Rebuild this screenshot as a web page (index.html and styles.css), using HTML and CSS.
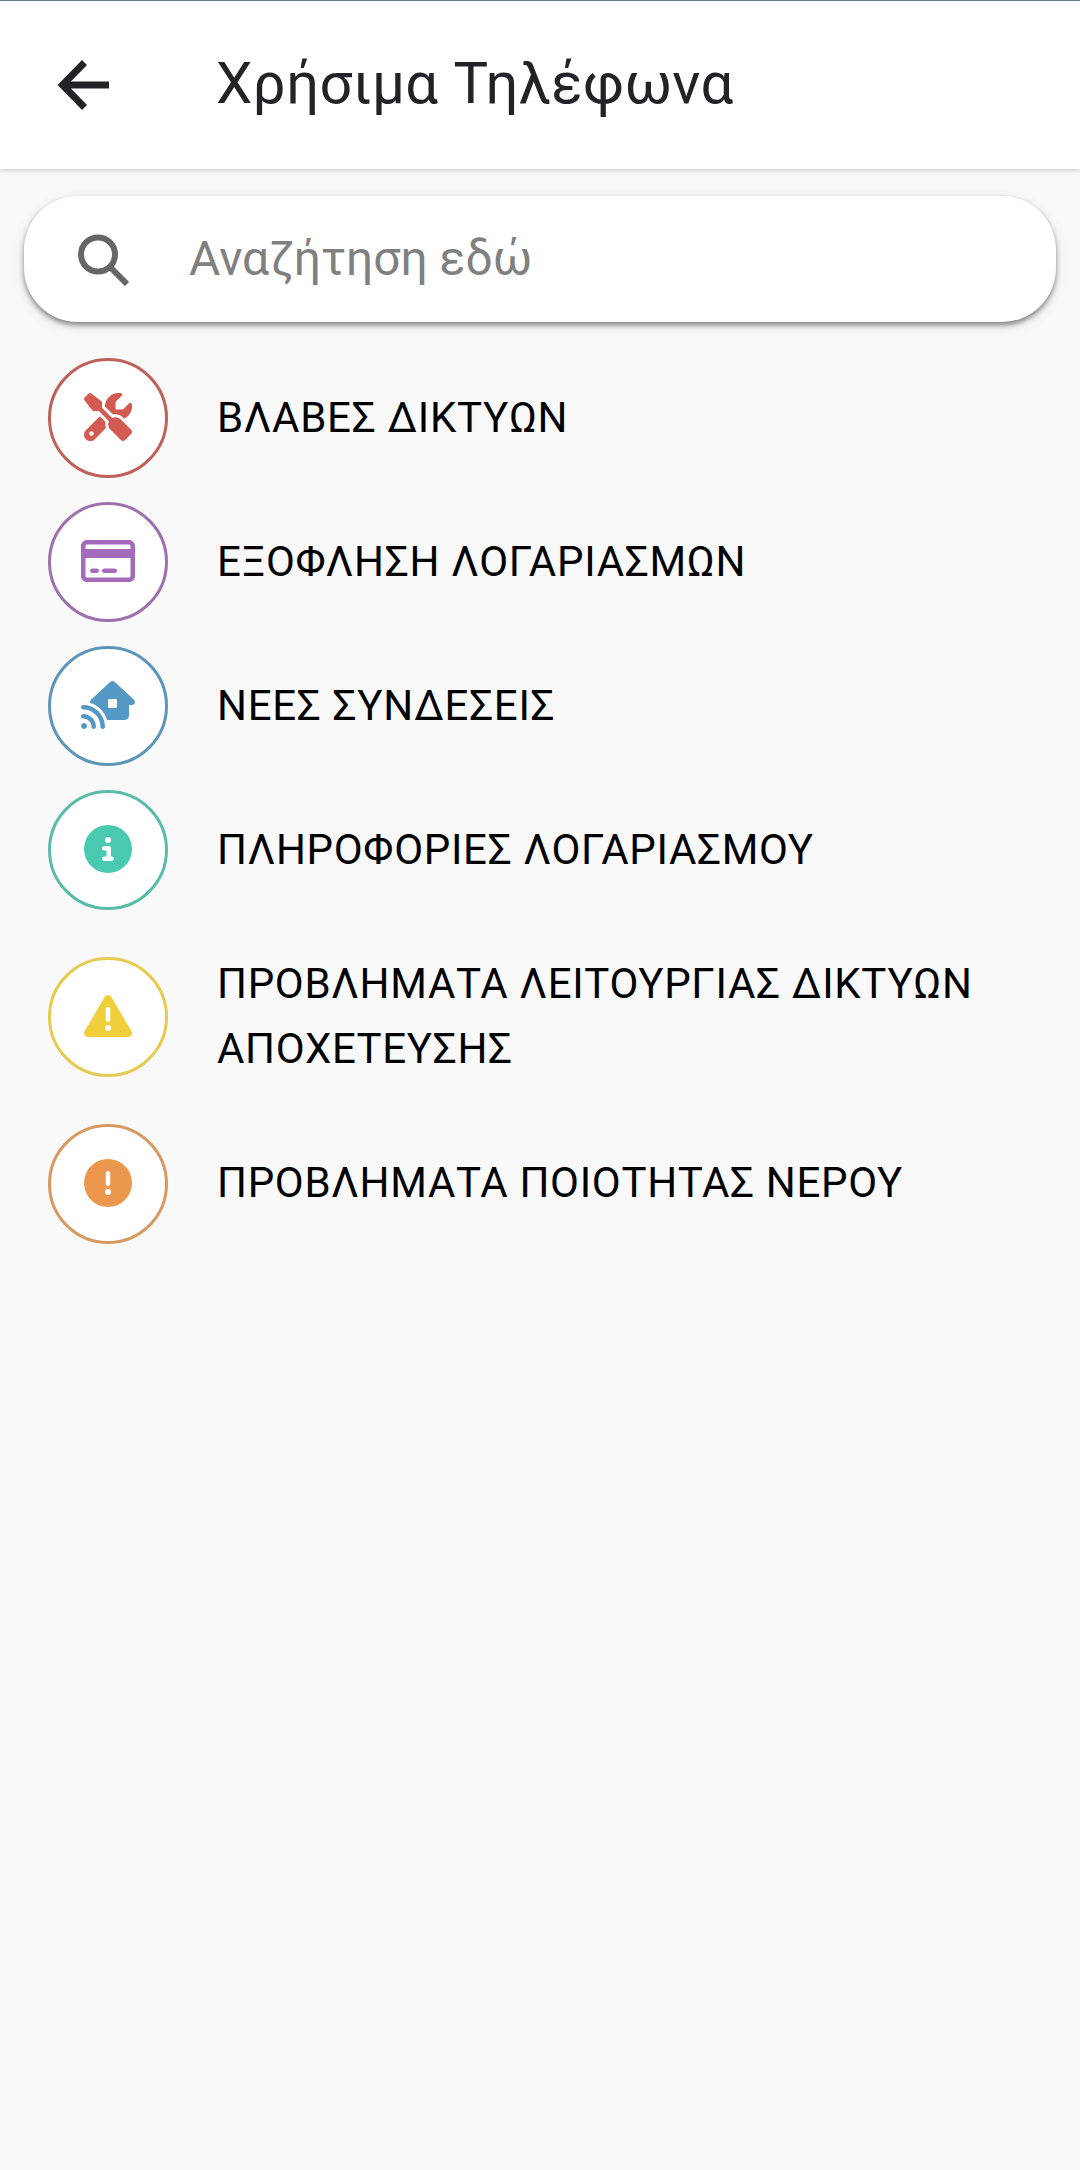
FILE: index.html
```
<!DOCTYPE html>
<html lang="el">
<head>
    <meta charset="UTF-8">
    <title>Χρήσιμα Τηλέφωνα</title>
    <link rel="stylesheet" href="styles.css">
</head>
<body>
    <header class="app-bar">
        <svg class="back" viewBox="0 0 56 56">
            <path d="M53 28H7M28.5 5.500L6.500 28l22 22.500"/>
        </svg>
        <h1>Χρήσιμα Τηλέφωνα</h1>
    </header>

    <div class="search">
        <svg class="search-icon" viewBox="0 0 54 54">
            <circle cx="21" cy="22.500" r="17"/>
            <path d="M32.500 34.500L50 52"/>
        </svg>
        <span class="placeholder">Αναζήτηση εδώ</span>
    </div>

    <ul class="list">
        <li class="item red">
            <span class="avatar">
                <svg viewBox="0 0 512 512"><path d="M78.6 5C69.1-2.4 55.6-1.5 47 7L7 47c-8.5 8.5-9.4 22-2.1 31.600l80 104c4.500 5.900 11.600 9.400 19 9.400h54.100l109 109c-14.700 29-10 65.400 14.300 89.600l112 112c12.500 12.500 32.800 12.500 45.300 0l64-64c12.500-12.500 12.500-32.800 0-45.300l-112-112c-24.200-24.200-60.600-29-89.600-14.300l-109-109V104c0-7.500-3.500-14.500-9.400-19L78.600 5zM19.900 396.100C7.200 408.800 0 426.100 0 444.100C0 481.600 30.400 512 67.900 512c18 0 35.300-7.200 48-19.900L233.700 374.300c-7.800-20.900-9-43.600-3.600-65.100l-61.700-61.700L19.900 396.100zM512 144c0-10.500-1.100-20.700-3.200-30.500c-2.400-11.200-16.100-14.100-24.200-6l-63.900 63.900c-3 3-7.100 4.700-11.300 4.700H352c-8.800 0-16-7.200-16-16V102.600c0-4.200 1.700-8.300 4.700-11.300l63.900-63.900c8.100-8.100 5.200-21.800-6-24.200C388.700 1.100 378.500 0 368 0C288.500 0 224 64.500 224 144l0 .8 85.300 85.300c36-9.100 75.800 .5 104 28.700L429 274.500c49-23 83-72.800 83-130.500zM56 432a24 24 0 1 1 48 0 24 24 0 1 1-48 0z"/></svg>
            </span>
            <span class="label">ΒΛΑΒΕΣ ΔΙΚΤΥΩΝ</span>
        </li>
        <li class="item purple">
            <span class="avatar">
                <svg class="wide" viewBox="0 0 576 512"><path d="M512 80c8.800 0 16 7.200 16 16v32H48V96c0-8.800 7.200-16 16-16H512zm16 144V416c0 8.800-7.200 16-16 16H64c-8.800 0-16-7.200-16-16V224H528zM64 32C28.700 32 0 60.700 0 96V416c0 35.300 28.700 64 64 64H512c35.300 0 64-28.700 64-64V96c0-35.300-28.700-64-64-64H64zm56 304c-13.300 0-24 10.700-24 24s10.700 24 24 24h48c13.300 0 24-10.700 24-24s-10.700-24-24-24H120zm128 0c-13.300 0-24 10.700-24 24s10.700 24 24 24H360c13.300 0 24-10.700 24-24s-10.700-24-24-24H248z"/></svg>
            </span>
            <span class="label">ΕΞΟΦΛΗΣΗ ΛΟΓΑΡΙΑΣΜΩΝ</span>
        </li>
        <li class="item blue">
            <span class="avatar">
                <svg class="wide" viewBox="0 0 576 512"><path d="M357.700 8.500c-12.300-11.300-31.200-11.300-43.400 0l-208 192c-9.400 8.600-12.700 22-8.500 34c87.100 25.300 155.600 94.200 180.300 181.500H464c26.500 0 48-21.500 48-48V256h32c13.200 0 25-8.100 29.800-20.300s1.600-26.200-8.100-35.200l-208-192zM288 208c0-8.800 7.200-16 16-16h64c8.800 0 16 7.200 16 16v64c0 8.800-7.200 16-16 16H304c-8.800 0-16-7.200-16-16V208zM24 256c-13.300 0-24 10.700-24 24s10.700 24 24 24c101.600 0 184 82.400 184 184c0 13.300 10.700 24 24 24s24-10.700 24-24c0-128.100-103.900-232-232-232zm8 256c17.700 0 32-14.300 32-32s-14.300-32-32-32s-32 14.300-32 32s14.300 32 32 32zM0 376c0 13.300 10.700 24 24 24c48.600 0 88 39.400 88 88c0 13.300 10.700 24 24 24s24-10.700 24-24c0-75.100-60.900-136-136-136c-13.300 0-24 10.700-24 24z"/></svg>
            </span>
            <span class="label">ΝΕΕΣ ΣΥΝΔΕΣΕΙΣ</span>
        </li>
        <li class="item green">
            <span class="avatar">
                <svg viewBox="0 0 512 512"><path d="M256 512A256 256 0 1 0 256 0a256 256 0 1 0 0 512zM216 336h24V272H216c-13.300 0-24-10.700-24-24s10.700-24 24-24h48c13.300 0 24 10.700 24 24v88h8c13.300 0 24 10.700 24 24s-10.700 24-24 24H216c-13.300 0-24-10.700-24-24s10.700-24 24-24zm40-208a32 32 0 1 1 0 64 32 32 0 1 1 0-64z"/></svg>
            </span>
            <span class="label">ΠΛΗΡΟΦΟΡΙΕΣ ΛΟΓΑΡΙΑΣΜΟΥ</span>
        </li>
        <li class="item yellow">
            <span class="avatar">
                <svg viewBox="0 0 512 512"><path d="M256 32c14.200 0 27.300 7.500 34.500 19.800l216 368c7.300 12.400 7.300 27.700 .2 40.100S486.300 480 472 480H40c-14.300 0-27.600-7.700-34.700-20.100s-7-27.800 .2-40.100l216-368C228.700 39.500 241.800 32 256 32zm0 128c-13.300 0-24 10.700-24 24V296c0 13.300 10.700 24 24 24s24-10.700 24-24V184c0-13.300-10.700-24-24-24zm32 224a32 32 0 1 0-64 0 32 32 0 1 0 64 0z"/></svg>
            </span>
            <span class="label">ΠΡΟΒΛΗΜΑΤΑ ΛΕΙΤΟΥΡΓΙΑΣ ΔΙΚΤΥΩΝ ΑΠΟΧΕΤΕΥΣΗΣ</span>
        </li>
        <li class="item orange">
            <span class="avatar">
                <svg viewBox="0 0 512 512"><path d="M256 512A256 256 0 1 0 256 0a256 256 0 1 0 0 512zm0-384c13.300 0 24 10.700 24 24V264c0 13.300-10.700 24-24 24s-24-10.700-24-24V152c0-13.300 10.700-24 24-24zM224 352a32 32 0 1 1 64 0 32 32 0 1 1-64 0z"/></svg>
            </span>
            <span class="label">ΠΡΟΒΛΗΜΑΤΑ ΠΟΙΟΤΗΤΑΣ ΝΕΡΟΥ</span>
        </li>
    </ul>
</body>
</html>
```

FILE: styles.css
```
* {
    box-sizing: border-box;
}
body {
    margin: 0;
    min-height: 100vh;
    background-color: #f9f9f9;
    font-family: Roboto, sans-serif;
    color: #000;
}
.app-bar {
    display: flex;
    align-items: center;
    height: 169px;
    padding-left: 56px;
    background-color: #fff;
    border-top: 1px solid #5f7f87;
    box-shadow: 0 1px 5px rgba(0, 0, 0, 0.2);
}
.back {
    width: 56px;
    height: 56px;
    fill: none;
    stroke: #212326;
    stroke-width: 7;
}
h1 {
    margin: 0 0 0 104px;
    padding-bottom: 4px;
    font-size: 58px;
    font-weight: 400;
    line-height: 68px;
    letter-spacing: 0.45px;
    color: #212326;
}
.search {
    display: flex;
    align-items: center;
    height: 126px;
    margin: 27px 24px 0;
    padding-left: 53px;
    background-color: #fff;
    border-radius: 54px;
    box-shadow: 0 3px 5px rgba(0, 0, 0, 0.42), 0 4px 14px rgba(0, 0, 0, 0.12);
}
.search-icon {
    width: 54px;
    height: 54px;
    fill: none;
    stroke: #666;
    stroke-width: 6;
}
.placeholder {
    margin-left: 58px;
    font-size: 48px;
    line-height: 56px;
    color: #808080;
}
.list {
    margin: 24px 0 0;
    padding: 0;
    list-style: none;
}
.item {
    display: flex;
    align-items: center;
    min-height: 144px;
    padding: 0 48px;
}
.avatar {
    display: flex;
    flex: none;
    align-items: center;
    justify-content: center;
    width: 120px;
    height: 120px;
    padding-bottom: 2px;
    border: 3px solid;
    border-radius: 50%;
    background-color: #fff;
}
.avatar svg {
    width: 48px;
    height: 48px;
    fill: var(--icon);
}
.avatar svg.wide {
    width: 54px;
}
.label {
    margin-left: 49px;
    padding: 29px 0 31px;
    font-size: 42px;
    line-height: 65px;
    letter-spacing: 0.7px;
}
.orange .label {
    padding-bottom: 33px;
}
.red { --icon: #d15b50; }
.purple { --icon: #a46abb; }
.blue { --icon: #5498c6; }
.green { --icon: #48c9b0; }
.yellow { --icon: #f0ce3c; }
.orange { --icon: #eb984e; }
.red .avatar { border-color: #bd6159; }
.purple .avatar { border-color: #9d70ae; }
.blue .avatar { border-color: #5d95b9; }
.green .avatar { border-color: #58bca9; }
.yellow .avatar { border-color: #e6cb50; }
.orange .avatar { border-color: #d89a61; }
```
